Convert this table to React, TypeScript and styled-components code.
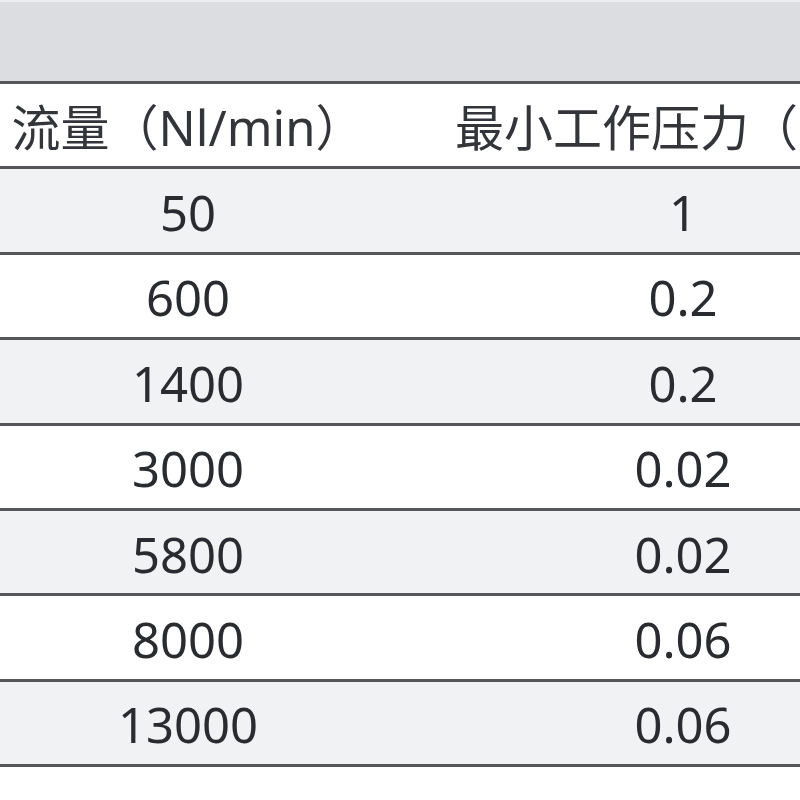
import React, { FC } from "react";
import styled, { createGlobalStyle, css } from "styled-components";

const GlobalStyle = createGlobalStyle`
  html, body {
    margin: 0;
    padding: 0;
    width: 800px;
    height: 800px;
    overflow: hidden;
    background: #ffffff;
  }
`;

const Table = styled.div`
  width: 1000px;
  display: flex;
  flex-direction: column;
  font-family: "Noto Sans", "Noto Sans CJK SC", sans-serif;
  font-size: 49px;
  color: #2a2b30;
`;

const TopBand = styled.div`
  height: 81px;
  box-sizing: border-box;
  border-top: 2px solid #ebecee;
  background: #dcdde0;
`;

const Row = styled.div<{ shaded: boolean; last?: boolean }>`
  display: grid;
  grid-template-columns: 376px 614px;
  height: 85.4px;
  box-sizing: border-box;
  border-top: 3px solid #55565a;
  background: ${({ shaded }) => (shaded ? "#f1f2f4" : "#ffffff")};

  ${({ last }) =>
    last &&
    css`
      height: 88.4px;
      border-bottom: 3px solid #55565a;
    `}
`;

const Cell = styled.div<{ header?: boolean; inset?: number }>`
  display: flex;
  align-items: center;
  justify-content: ${({ inset }) => (inset ? "flex-start" : "center")};
  padding-left: ${({ inset }) => (inset ? `${inset}px` : "0")};
  padding-top: 4px;
  white-space: nowrap;
  line-height: 1;
  color: ${({ header }) => (header ? "#34353a" : "#2a2b30")};
`;

const rows: [string, string][] = [
  ["50", "1"],
  ["600", "0.2"],
  ["1400", "0.2"],
  ["3000", "0.02"],
  ["5800", "0.02"],
  ["8000", "0.06"],
  ["13000", "0.06"],
];

const App: FC = () => {
  return (
    <>
      <GlobalStyle />
      <Table>
        <TopBand />
        <Row shaded={false}>
          <Cell header>流量（Nl/min）</Cell>
          <Cell header inset={79}>
            最小工作压力（MPa）
          </Cell>
        </Row>
        {rows.map(([flow, pressure], i) => (
          <Row key={i} shaded={i % 2 === 0} last={i === rows.length - 1}>
            <Cell>{flow}</Cell>
            <Cell>{pressure}</Cell>
          </Row>
        ))}
      </Table>
    </>
  );
};

export default App;
